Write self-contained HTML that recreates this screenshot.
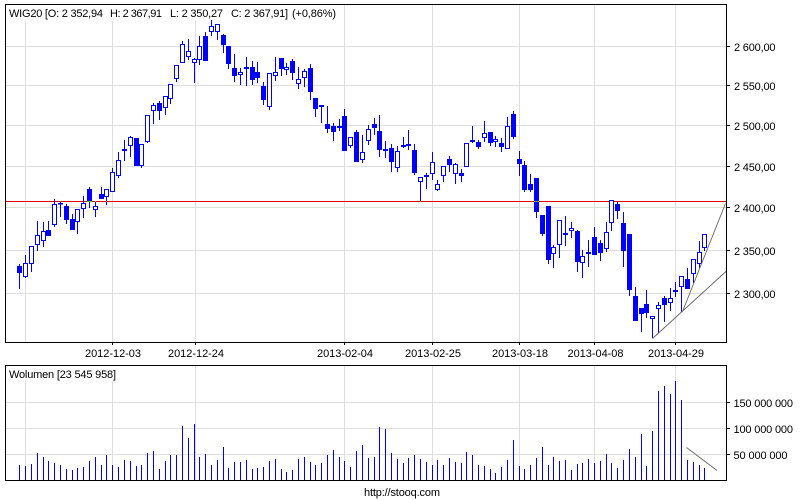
<!DOCTYPE html>
<html>
<head>
<meta charset="utf-8">
<style>
html,body{margin:0;padding:0;background:#fff}
svg{display:block;position:absolute;left:0;top:0}
text{font-family:"Liberation Sans",Arial,sans-serif;font-size:11px;fill:#000}
.c{shape-rendering:crispEdges}
</style>
</head>
<body>
<svg width="800" height="500" viewBox="0 0 800 500" xmlns="http://www.w3.org/2000/svg">
<rect width="800" height="500" fill="#fff"/>
<!-- grid -->
<path class="c" fill="none" stroke="#dedede" stroke-width="1" d="M6 46.5H726M6 85.5H726M6 125.5H726M6 166.5H726M6 207.5H726M6 250.5H726M6 293.5H726M25.5 5V342M112.5 5V342M195.5 5V342M344.5 5V342M432.5 5V342M519.5 5V342M594.5 5V342M675.5 5V342M6 402.5H726M6 428.5H726M6 454.5H726M25.5 366V480M112.5 366V480M195.5 366V480M344.5 366V480M432.5 366V480M519.5 366V480M594.5 366V480M675.5 366V480"/>
<rect x="6" y="5" width="332" height="16" fill="#fff"/>
<rect x="6" y="366" width="112" height="15" fill="#fff"/>
<!-- reference line -->
<path class="c" stroke="#e00000" fill="none" d="M6 201.5H726"/>
<!-- wicks -->
<path class="c" fill="none" stroke="#0000ff" stroke-width="1" d="M19.5 264V289M25.5 255V278M31.5 246V272M37.5 221V251M43.5 222V247M48.5 221V236M54.5 199V227M60.5 201V217M66.5 204V224M72.5 214V230M77.5 209V234M83.5 196V218M89.5 187V208M95.5 201V217M101.5 187V199M106.5 189V205M112.5 168V192M118.5 152V178M124.5 140V161M130.5 136V157M136.5 138V166M141.5 144V168M147.5 115V143M153.5 103V124M159.5 101V120M165.5 96V115M170.5 84V104M176.5 65V82M182.5 41V63M188.5 39V60M194.5 58V83M199.5 36V65M205.5 32V61M211.5 20V36M217.5 24V40M223.5 34V53M228.5 46V69M234.5 54V82M240.5 68V85M246.5 57V86M252.5 61V85M257.5 62V83M263.5 82V105M269.5 73V110M275.5 57V81M281.5 58V76M286.5 63V75M292.5 59V80M298.5 67V89M304.5 69V87M310.5 64V100M315.5 98V117M321.5 105V123M327.5 106V133M333.5 123V141M339.5 119V131M344.5 109V151M350.5 137V148M356.5 130V162M362.5 135V163M368.5 125V145M374.5 118V135M379.5 115V157M385.5 141V158M391.5 144V172M397.5 146V172M403.5 137V148M408.5 130V150M414.5 144V175M420.5 177V201M426.5 173V189M432.5 152V180M437.5 180V191M443.5 166V182M449.5 156V172M455.5 163V184M461.5 169V182M466.5 143V167M472.5 126V143M478.5 140V149M484.5 121V142M490.5 132V146M495.5 136V147M501.5 138V152M507.5 117V149M513.5 111V139M519.5 151V176M524.5 161V192M530.5 174V192M536.5 178V218M542.5 215V236M548.5 206V264M553.5 245V268M559.5 220V258M565.5 216V246M571.5 222V238M577.5 230V272M582.5 250V278M588.5 240V267M594.5 227V255M600.5 240V261M606.5 222V252M611.5 200V231M617.5 202V219M623.5 212V267M629.5 234V296M635.5 287V321M641.5 308V332M646.5 290V318M652.5 316V338M658.5 302V333M664.5 296V322M670.5 288V311M675.5 282V297M681.5 276V312M687.5 268V289M693.5 259V283M699.5 241V268M704.5 234V251"/>
<!-- hollow bodies -->
<path class="c" fill="#fff" stroke="#0000ff" stroke-width="1" d="M23.5 263.5h4V276.5h-4zM29.5 246.5h4V263.5h-4zM35.5 235.5h4V244.5h-4zM41.5 231.5h4V240.5h-4zM52.5 204.5h4V224.5h-4zM75.5 209.5h4V221.5h-4zM81.5 203.5h4V208.5h-4zM93.5 206.5h4V209.5h-4zM104.5 189.5h4V196.5h-4zM110.5 172.5h4V191.5h-4zM116.5 160.5h4V175.5h-4zM128.5 137.5h4V145.5h-4zM139.5 144.5h4V165.5h-4zM145.5 115.5h4V141.5h-4zM151.5 105.5h4V110.5h-4zM163.5 96.5h4V107.5h-4zM168.5 84.5h4V98.5h-4zM174.5 65.5h4V78.5h-4zM180.5 44.5h4V62.5h-4zM186.5 51.5h4V56.5h-4zM192.5 59.5h4V62.5h-4zM197.5 46.5h4V59.5h-4zM209.5 26.5h4V31.5h-4zM215.5 24.5h4V31.5h-4zM238.5 72.5h4V74.5h-4zM267.5 73.5h4V106.5h-4zM273.5 72.5h4V75.5h-4zM284.5 67.5h4V69.5h-4zM296.5 79.5h4V83.5h-4zM302.5 71.5h4V77.5h-4zM348.5 137.5h4V145.5h-4zM360.5 152.5h4V159.5h-4zM366.5 129.5h4V140.5h-4zM395.5 151.5h4V167.5h-4zM418.5 177.5h4V181.5h-4zM430.5 162.5h4V173.5h-4zM435.5 184.5h4V189.5h-4zM441.5 166.5h4V175.5h-4zM453.5 164.5h4V173.5h-4zM464.5 143.5h4V166.5h-4zM482.5 133.5h4V137.5h-4zM493.5 139.5h4V141.5h-4zM505.5 126.5h4V148.5h-4zM551.5 247.5h4V253.5h-4zM557.5 220.5h4V244.5h-4zM569.5 228.5h4V230.5h-4zM580.5 256.5h4V262.5h-4zM604.5 232.5h4V248.5h-4zM609.5 200.5h4V222.5h-4zM650.5 316.5h4V318.5h-4zM656.5 305.5h4V308.5h-4zM668.5 298.5h4V302.5h-4zM679.5 276.5h4V286.5h-4zM691.5 259.5h4V273.5h-4zM697.5 252.5h4V263.5h-4zM702.5 234.5h4V247.5h-4z"/>
<!-- filled bodies -->
<path class="c" fill="none" stroke="#0000ff" stroke-width="5" d="M19.5 266V273M48.5 230V236M60.5 203V204.5M66.5 206V220M72.5 219V230M89.5 189V201M101.5 194V199M124.5 149V151M136.5 138V166M159.5 103V111M205.5 36V61M223.5 35V45M228.5 46V64M234.5 68V76M246.5 67V69M252.5 67V80M257.5 72V78M263.5 86V100M281.5 58V69M292.5 61V73M310.5 68V92M315.5 98V109M321.5 105V107M327.5 124V129M333.5 126V132M339.5 126V128M344.5 116V151M356.5 132V162M374.5 124V128M379.5 131V150M385.5 149V151M391.5 148V162M403.5 145V147M408.5 144V146M414.5 150V173M426.5 175V177M449.5 159V165M461.5 173V176M472.5 140V142M478.5 142V147M490.5 132V143M501.5 143V147M513.5 114V137M519.5 159V164M524.5 165V190M530.5 184V190M536.5 178V212M542.5 215V234M548.5 206V260M565.5 233V235M577.5 231V262M588.5 252V254M594.5 237V255M600.5 243V253M617.5 204V211M623.5 223V251M629.5 234V290M635.5 296V321M641.5 308V314M646.5 304V313M664.5 298V305M675.5 290V292M687.5 279V289"/>
<!-- green crossing pixels -->
<path class="c" fill="none" stroke="#30d040" stroke-width="1" d="M87 201.5H92M534 201.5H539M60 201.5H61M95 201.5H96M106 201.5H107M420 201.5H421"/>
<!-- trendlines -->
<path fill="none" stroke="#666" stroke-width="0.9" d="M652.5 338.5L726.5 271M682.5 311.5L725.5 203.5M686.5 447.5L717 470.5"/>
<!-- volume bars -->
<path class="c" fill="none" stroke="#0000ff" stroke-width="1" d="M19.5 465V480M25.5 466V480M31.5 464V480M37.5 453V480M43.5 457V480M48.5 461V480M54.5 463V480M60.5 465V480M66.5 469V480M72.5 470V480M77.5 468V480M83.5 467V480M89.5 461V480M95.5 457V480M101.5 465V480M106.5 455V480M112.5 465V480M118.5 467V480M124.5 460V480M130.5 461V480M136.5 466V480M141.5 465V480M147.5 453V480M153.5 451V480M159.5 469V480M165.5 461V480M170.5 455V480M176.5 455V480M182.5 426V480M188.5 438V480M194.5 424V480M199.5 457V480M205.5 454V480M211.5 465V480M217.5 460V480M223.5 447V480M228.5 468V480M234.5 462V480M240.5 462V480M246.5 460V480M252.5 469V480M257.5 468V480M263.5 467V480M269.5 461V480M275.5 459V480M281.5 469V480M286.5 472V480M292.5 470V480M298.5 459V480M304.5 457V480M310.5 462V480M315.5 465V480M321.5 463V480M327.5 455V480M333.5 450V480M339.5 457V480M344.5 461V480M350.5 467V480M356.5 451V480M362.5 445V480M368.5 458V480M374.5 457V480M379.5 427V480M385.5 429V480M391.5 453V480M397.5 459V480M403.5 463V480M408.5 458V480M414.5 455V480M420.5 459V480M426.5 462V480M432.5 465V480M437.5 460V480M443.5 465V480M449.5 458V480M455.5 462V480M461.5 463V480M466.5 452V480M472.5 455V480M478.5 465V480M484.5 466V480M490.5 469V480M495.5 473V480M501.5 467V480M507.5 460V480M513.5 440V480M519.5 466V480M524.5 469V480M530.5 465V480M536.5 458V480M542.5 447V480M548.5 465V480M553.5 457V480M559.5 461V480M565.5 460V480M571.5 470V480M577.5 464V480M582.5 463V480M588.5 459V480M594.5 463V480M600.5 461V480M606.5 454V480M611.5 463V480M617.5 468V480M623.5 460V480M629.5 449V480M635.5 457V480M641.5 434V480M646.5 466V480M652.5 431V480M658.5 391V480M664.5 386V480M670.5 394V480M675.5 381V480M681.5 400V480M687.5 460V480M693.5 462V480M699.5 465V480M704.5 468V480"/>
<!-- frames and ticks -->
<path class="c" fill="none" stroke="#000" stroke-width="1" d="M5.5 4.5H726.5V342.5H5.5ZM5.5 365.5H726.5V480.5H5.5ZM726 46.5H730M726 85.5H730M726 125.5H730M726 166.5H730M726 207.5H730M726 250.5H730M726 293.5H730M726 402.5H730M726 428.5H730M726 454.5H730M112.5 342V345M195.5 342V345M344.5 342V345M432.5 342V345M519.5 342V345M594.5 342V345M675.5 342V345"/>
<!-- text -->
<text x="9" y="17" textLength="94">WIG20 [O: 2 352,94</text>
<text x="110" y="17" textLength="52">H: 2 367,91</text>
<text x="170" y="17" textLength="53">L: 2 350,27</text>
<text x="231" y="17" textLength="57">C: 2 367,91]</text>
<text x="292" y="17" textLength="44">(+0,86%)</text>
<text x="734" y="51" textLength="41.5">2 600,00</text>
<text x="734" y="90" textLength="41.5">2 550,00</text>
<text x="734" y="130" textLength="41.5">2 500,00</text>
<text x="734" y="171" textLength="41.5">2 450,00</text>
<text x="734" y="212" textLength="41.5">2 400,00</text>
<text x="734" y="255" textLength="41.5">2 350,00</text>
<text x="734" y="298" textLength="41.5">2 300,00</text>
<text x="85" y="357" textLength="56">2012-12-03</text>
<text x="168" y="357" textLength="56">2012-12-24</text>
<text x="317" y="357" textLength="56">2013-02-04</text>
<text x="405" y="357" textLength="56">2013-02-25</text>
<text x="492" y="357" textLength="56">2013-03-18</text>
<text x="567.5" y="357" textLength="56">2013-04-08</text>
<text x="648" y="357" textLength="56">2013-04-29</text>
<text x="9" y="378" textLength="107">Wolumen [23 545 958]</text>
<text x="733.5" y="407" textLength="59.5">150 000 000</text>
<text x="733.5" y="433" textLength="59.5">100 000 000</text>
<text x="733.5" y="459" textLength="54">50 000 000</text>
<text x="364" y="496" textLength="76">http://stooq.com</text>
</svg>
</body>
</html>
